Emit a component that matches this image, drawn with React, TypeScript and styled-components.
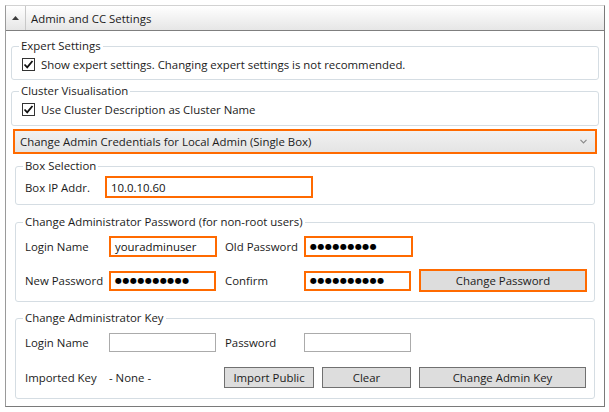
import React from 'react';
import styled, {createGlobalStyle} from 'styled-components';

const GlobalStyle = createGlobalStyle`
  html, body {
    margin: 0;
    padding: 0;
    background: #ffffff;
  }
  body {
    font-family: 'Open Sans', 'Noto Sans', sans-serif;
    font-size: 11.4px;
    color: #1b1b1b;
  }
`;

const ORANGE = '#ff6a00';
const FS = '11.4px';

const Page = styled.div`
  padding: 5px 4px 5px 5px;
  width: 600px;
`;

const Panel = styled.div`
  border: 1px solid #9a9a9a;
  border-top-color: #d2d2d2;
  border-right-color: #7a7a7a;
  border-bottom-color: #7a7a7a;
  display: flex;
  flex-direction: column;
`;

const Header = styled.div`
  height: 24px;
  display: flex;
  align-items: stretch;
  background: linear-gradient(#ffffff, #e6e6e6);
  border-bottom: 1px solid #7f7f7f;
`;

const ArrowCell = styled.div`
  width: 19px;
  display: flex;
  align-items: center;
  justify-content: center;
  border-right: 1px solid #c8c8c8;
`;

const HeaderTitle = styled.div`
  display: flex;
  align-items: center;
  padding-left: 5px;
  font-size: ${FS};
`;

const Body = styled.div`
  padding: 0 5px 7px 5px;
  display: flex;
  flex-direction: column;
`;

const Group = styled.fieldset<{$inset?: boolean; $top: number; $height: number}>`
  margin: ${p => p.$top}px ${p => (p.$inset ? 4 : 0)}px 0 ${p => (p.$inset ? 4 : 0)}px;
  padding: 0 8px 0 9px;
  border: 1px solid #d5dde3;
  border-radius: 3px;
  height: ${p => p.$height}px;
  box-sizing: border-box;
  min-width: 0;
`;

const Legend = styled.legend`
  padding: 0 2px 0 2px;
  margin-left: -2px;
  font-size: ${FS};
  line-height: 16px;
  color: #1b1b1b;
`;

const CheckRow = styled.label`
  display: flex;
  align-items: center;
  gap: 6px;
  height: 18px;
  margin-top: 1px;
  margin-left: 1px;
  font-size: ${FS};
`;

const CheckBox = styled.span`
  width: 13px;
  height: 13px;
  border: 1px solid #333333;
  box-sizing: border-box;
  background: #ffffff;
  display: flex;
  align-items: center;
  justify-content: center;
  flex: none;
`;

const Combo = styled.div`
  margin: 3px 2px 0 2px;
  height: 25px;
  box-sizing: border-box;
  border: 2px solid ${ORANGE};
  background: linear-gradient(#f1f1f1, #e4e4e4);
  display: flex;
  align-items: center;
  justify-content: space-between;
  padding: 0 8px 0 5px;
  font-size: ${FS};
`;

const Grid = styled.div<{$rowGap: number; $mt: number}>`
  display: grid;
  grid-template-columns: 84px 116px 79px 115px 168px;
  row-gap: ${p => p.$rowGap}px;
  margin-top: ${p => p.$mt}px;
  align-items: center;
`;

const Label = styled.span`
  font-size: ${FS};
  white-space: nowrap;
`;

const Input = styled.div<{$highlight?: boolean; $w: number; $h: number}>`
  width: ${p => p.$w}px;
  height: ${p => p.$h}px;
  box-sizing: border-box;
  border: ${p => (p.$highlight ? `2px solid ${ORANGE}` : '1px solid #ababab')};
  background: #ffffff;
  display: flex;
  align-items: center;
  padding-left: ${p => (p.$highlight ? 4 : 5)}px;
  font-size: ${FS};
  color: #111111;
`;

const Dots = styled.span`
  font-size: 8px;
  letter-spacing: 0.5px;
  font-family: 'DejaVu Sans', sans-serif;
  color: #000000;
`;

const Button = styled.div<{$highlight?: boolean; $w: number; $h: number}>`
  width: ${p => p.$w}px;
  height: ${p => p.$h}px;
  box-sizing: border-box;
  border: ${p => (p.$highlight ? `2px solid ${ORANGE}` : '1px solid #707070')};
  background: #dddddd;
  display: flex;
  align-items: center;
  justify-content: center;
  font-size: ${FS};
  color: #1b1b1b;
`;

const ButtonPair = styled.div`
  grid-column: 3 / span 2;
  display: flex;
  gap: 8px;
  margin-left: -1px;
`;

const Check = () => (
  <CheckBox>
    <svg width="11" height="11" viewBox="0 0 11 11">
      <path d="M1.5 5.5 L4.2 8.3 L9.5 2" fill="none" stroke="#111" strokeWidth="1.8" />
    </svg>
  </CheckBox>
);

const App = () => (
  <Page>
    <GlobalStyle />
    <Panel>
      <Header>
        <ArrowCell>
          <svg width="7" height="4" viewBox="0 0 7 4">
            <path d="M0 4 L3.5 0 L7 4 Z" fill="#3c3c3c" />
          </svg>
        </ArrowCell>
        <HeaderTitle>Admin and CC Settings</HeaderTitle>
      </Header>
      <Body>
        <Group $top={7} $height={42}>
          <Legend>Expert Settings</Legend>
          <CheckRow>
            <Check />
            Show expert settings. Changing expert settings is not recommended.
          </CheckRow>
        </Group>
        <Group $top={3} $height={43}>
          <Legend>Cluster Visualisation</Legend>
          <CheckRow>
            <Check />
            Use Cluster Description as Cluster Name
          </CheckRow>
        </Group>
        <Combo>
          <span>Change Admin Credentials for Local Admin (Single Box)</span>
          <svg width="7" height="5" viewBox="0 0 7 5">
            <path d="M0.5 0.8 L3.5 3.8 L6.5 0.8" fill="none" stroke="#8a8a8a" strokeWidth="1.2" />
          </svg>
        </Combo>
        <Group $inset $top={4} $height={47}>
          <Legend>Box Selection</Legend>
          <Grid $rowGap={0} $mt={2} style={{gridTemplateColumns: '80px 220px'}}>
            <Label>Box IP Addr.</Label>
            <Input $highlight $w={208} $h={22}>10.0.10.60</Input>
          </Grid>
        </Group>
        <Group $inset $top={9} $height={88}>
          <Legend>Change Administrator Password (for non-root users)</Legend>
          <Grid $rowGap={12} $mt={6}>
            <Label>Login Name</Label>
            <Input $highlight $w={108} $h={21}>youradminuser</Input>
            <Label>Old Password</Label>
            <Input $highlight $w={109} $h={21}>
              <Dots>●●●●●●●●●</Dots>
            </Input>
            <span />
            <Label>New Password</Label>
            <Input $highlight $w={107} $h={20}>
              <Dots>●●●●●●●●●●</Dots>
            </Input>
            <Label>Confirm</Label>
            <Input $highlight $w={107} $h={20}>
              <Dots>●●●●●●●●●●</Dots>
            </Input>
            <Button $highlight $w={168} $h={23}>Change Password</Button>
          </Grid>
        </Group>
        <Group $inset $top={8} $height={89}>
          <Legend>Change Administrator Key</Legend>
          <Grid $rowGap={15} $mt={7}>
            <Label>Login Name</Label>
            <Input $w={107} $h={19} />
            <Label>Password</Label>
            <Input $w={107} $h={19} />
            <span />
            <Label>Imported Key</Label>
            <Label>- None -</Label>
            <ButtonPair>
              <Button $w={90} $h={21}>Import Public</Button>
              <Button $w={89} $h={21}>Clear</Button>
            </ButtonPair>
            <Button $w={167} $h={21}>Change Admin Key</Button>
          </Grid>
        </Group>
      </Body>
    </Panel>
  </Page>
);

export default App;
